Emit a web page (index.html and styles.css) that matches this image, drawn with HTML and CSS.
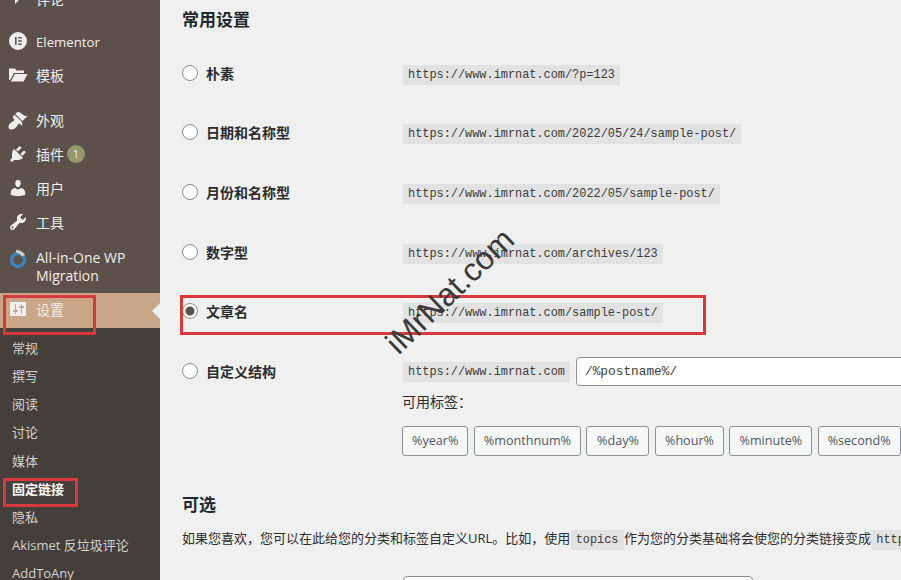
FILE: index.html
```html
<!DOCTYPE html>
<html lang="zh-CN">
<head>
    <meta charset="UTF-8">
    <title>固定链接设置</title>
    <link rel="stylesheet" href="styles.css">
</head>
<body>

    <!-- Admin menu -->
    <div class="sidebar">
        <div class="menu-item">
            <svg class="menu-icon menu-icon-comment" viewBox="0 0 20 20"><path d="M5 2h10c1.100 0 2 .9 2 2v6c0 1.100-.9 2-2 2h-3l-5 5v-5H5c-1.100 0-2-.9-2-2V4c0-1.100.9-2 2-2z"/></svg>
            <span>评论</span>
        </div>
        <div class="menu-sep-sm"></div>
        <div class="menu-item">
            <svg class="menu-icon" viewBox="0 0 20 20"><path fill-rule="evenodd" d="M10 1a9 9 0 1 0 0 18 9 9 0 0 0 0-18zM7 6h1.600v8H7zm3.200 0h3.500v1.600h-3.500zm0 3.200h3.500v1.600h-3.500zm0 3.200h3.500V14h-3.500z"/></svg>
            <span class="menu-latin">Elementor</span>
        </div>
        <div class="menu-item">
            <svg class="menu-icon" viewBox="0 0 20 20"><path d="M1 3.500h6l1.500 2H16V8H6L2.200 15H1zM6.800 9H19.500l-3.800 7.500H2.800z"/></svg>
            <span>模板</span>
        </div>
        <div class="menu-sep"></div>
        <div class="menu-item">
            <svg class="menu-icon" viewBox="0 0 20 20"><path d="M14.500 11L7.400 4l1.500-1.500c.5-.6 2.300-.5 3.500.3 1.200.8 1.400 1.300 2.900 2.100 1.200.6 2.500 1.300 4.400.9zm-.7.7L6.700 4.700 4.900 6.500c-.4.4-.4 1 0 1.400l1.100 1.100c.4.4.4 1 0 1.400-.6.6-1.400 1.100-2.200 1.700-.4.3-.7.5-1 .8C1.400 13.200.5 15 .5 17c0 1.400 1.100 2.500 2.500 2.500 2 0 3.800-.9 5.100-2.300.3-.3.500-.7.800-1 .6-.8 1.100-1.600 1.700-2.200.4-.4 1-.4 1.400 0l1.100 1.100c.4.4 1 .4 1.400 0z"/></svg>
            <span>外观</span>
        </div>
        <div class="menu-item">
            <svg class="menu-icon" viewBox="0 0 20 20"><path d="M13.110 4.360L9.870 7.600 8 5.730l3.240-3.240c.35-.34 1.050-.2 1.560.32.52.51.66 1.210.31 1.550zm-8 1.770l.91-1.120 9.010 9.010-1.190.84c-.71.71-2.630 1.160-3.820 1.160H6.140L4.900 17.260c-.59.59-1.540.59-2.120 0-.59-.58-.59-1.530 0-2.120l1.240-1.240v-3.880c0-1.130.4-3.190 1.090-3.890zm7.260 3.970l3.240-3.240c.34-.35 1.040-.21 1.550.31.52.51.66 1.210.31 1.550l-3.240 3.250z"/></svg>
            <span>插件</span><span class="count-badge">1</span>
        </div>
        <div class="menu-item">
            <svg class="menu-icon" viewBox="0 0 20 20"><path d="M10 9.250c-2.270 0-2.730-3.440-2.730-3.440C7 4.020 7.820 2 9.970 2c2.160 0 2.980 2.020 2.710 3.810 0 0-.41 3.440-2.680 3.440zm0 2.570L12.720 10c2.390 0 4.520 2.330 4.520 4.530v2.490s-3.650 1.130-7.240 1.130c-3.650 0-7.240-1.130-7.240-1.130v-2.490c0-2.250 1.940-4.480 4.470-4.480z"/></svg>
            <span>用户</span>
        </div>
        <div class="menu-item">
            <svg class="menu-icon" viewBox="0 0 20 20"><path fill-rule="evenodd" d="M16.680 9.770c-1.340 1.340-3.300 1.670-4.950.99l-5.410 6.520c-.99.99-2.590.99-3.580 0s-.99-2.590 0-3.570l6.520-5.420c-.68-1.650-.35-3.610.99-4.950 1.280-1.280 3.120-1.620 4.720-1.060l-2.890 2.890 2.820 2.820 2.860-2.870c.53 1.580.18 3.390-1.080 4.670zM3.810 16.210c.4.39 1.040.39 1.430 0 .4-.4.4-1.040 0-1.430-.39-.4-1.030-.4-1.430 0-.39.39-.39 1.030 0 1.430z"/></svg>
            <span>工具</span>
        </div>
        <div class="menu-item menu-item-tall">
            <svg class="menu-icon" viewBox="0 0 20 20"><circle cx="10" cy="11" r="6.500" fill="none" stroke="#3b86b8" stroke-width="3.500"/><path d="M8 .8c4.200.2 7.500 2.200 9 5.500l-3.200 1.200c-1-2.200-3.200-3.500-5.800-3.700z" fill="#cfcac6"/></svg>
            <span class="menu-label-wrap">All-in-One WP Migration</span>
        </div>
        <div class="menu-item menu-item-active">
            <svg class="menu-icon" viewBox="0 0 20 20"><path fill-rule="evenodd" d="M18 16V4c0-.55-.45-1-1-1H3c-.55 0-1 .45-1 1v12c0 .55.45 1 1 1h14c.55 0 1-.45 1-1zM8 11h1c.55 0 1 .45 1 1s-.45 1-1 1H8v1.500c0 .28-.22.5-.5.5s-.5-.22-.5-.5V13H6c-.55 0-1-.45-1-1s.45-1 1-1h1V5.500c0-.28.22-.5.5-.5s.5.22.5.5V11zm5-2h-1c-.55 0-1-.45-1-1s.45-1 1-1h1V5.500c0-.28.22-.5.5-.5s.5.22.5.5V7h1c.55 0 1 .45 1 1s-.45 1-1 1h-1v5.500c0 .28-.22.5-.5.5s-.5-.22-.5-.5V9z"/></svg>
            <span>设置</span>
        </div>
        <ul class="submenu">
            <li>常规</li>
            <li>撰写</li>
            <li>阅读</li>
            <li>讨论</li>
            <li>媒体</li>
            <li class="current">固定链接</li>
            <li>隐私</li>
            <li>Akismet 反垃圾评论</li>
            <li>AddToAny</li>
        </ul>
    </div>

    <!-- Permalink settings -->
    <div class="content">
        <h2 class="section-title">常用设置</h2>

        <label class="link-row">
            <span class="link-name"><input type="radio" name="structure">朴素</span>
            <span><code>https://www.imrnat.com/?p=123</code></span>
        </label>
        <label class="link-row">
            <span class="link-name"><input type="radio" name="structure">日期和名称型</span>
            <span><code>https://www.imrnat.com/2022/05/24/sample-post/</code></span>
        </label>
        <label class="link-row">
            <span class="link-name"><input type="radio" name="structure">月份和名称型</span>
            <span><code>https://www.imrnat.com/2022/05/sample-post/</code></span>
        </label>
        <label class="link-row">
            <span class="link-name"><input type="radio" name="structure">数字型</span>
            <span><code>https://www.imrnat.com/archives/123</code></span>
        </label>
        <label class="link-row">
            <span class="link-name"><input type="radio" name="structure" checked>文章名</span>
            <span><code>https://www.imrnat.com/sample-post/</code></span>
        </label>

        <div class="custom-row">
            <label class="link-name custom-name"><input type="radio" name="structure">自定义结构</label>
            <div class="custom-body">
                <div class="custom-line">
                    <code>https://www.imrnat.com</code>
                    <input class="custom-input" type="text" value="/%postname%/">
                </div>
                <p class="tags-label">可用标签：</p>
                <div class="tags">
                    <button>%year%</button>
                    <button>%monthnum%</button>
                    <button>%day%</button>
                    <button>%hour%</button>
                    <button>%minute%</button>
                    <button>%second%</button>
                </div>
            </div>
        </div>

        <h2 class="section-title optional-title">可选</h2>
        <p class="optional-text">如果您喜欢，您可以在此给您的分类和标签自定义URL。比如，使用 <code>topics</code> 作为您的分类基础将会使您的分类链接变成 <code>http://www.imrnat.com/topics/</code></p>
        <div class="base-row"><input class="base-input" type="text"></div>
    </div>

    <!-- Annotations on top of the screenshot -->
    <div class="mark mark-settings"></div>
    <div class="mark mark-permalink"></div>
    <div class="mark mark-row"></div>
    <div class="watermark">iMrNat.com</div>

</body>
</html>
```

FILE: styles.css
```css
/* Basic Styles */
html, body {
    height: 100%;
    margin: 0;
    padding: 0;
    overflow: hidden;
}

body {
    display: flex;
    background-color: #f0f0f0;
    color: #2c2c2c;
    font-family: "Open Sans", "Noto Sans CJK SC", sans-serif;
    font-size: 13px;
}

/* Admin menu */
.sidebar {
    flex: 0 0 160px;
    height: 620px;
    margin-top: -18px;
    background-color: #5b504a;
    color: #f1efed;
    font-size: 14px;
}

.menu-item {
    display: flex;
    align-items: center;
    height: 34px;
    padding-left: 8px;
}

.menu-item-tall {
    height: 54px;
    align-items: flex-start;
    padding-top: 10px;
    box-sizing: border-box;
    line-height: 18px;
}

.menu-item-active {
    position: relative;
    box-sizing: border-box;
    height: 35px;
    padding-bottom: 4px;
    background-color: #c9a688;
}

.menu-item-active::after {
    content: "";
    position: absolute;
    right: 0;
    top: 10px;
    border: 8px solid transparent;
    border-left-width: 0;
    border-right-color: #f0f0f0;
}

.menu-sep-sm {
    height: 8px;
}

.menu-sep {
    height: 11px;
}

.menu-icon {
    flex: 0 0 20px;
    width: 20px;
    height: 20px;
    margin-right: 8px;
    fill: #f1efed;
}

.menu-icon-comment {
    margin-top: -4px;
}

.menu-latin {
    padding-top: 2px;
    font-size: 13.2px;
}

.menu-label-wrap {
    width: 110px;
}

.count-badge {
    width: 18px;
    height: 18px;
    margin-left: 3px;
    border-radius: 50%;
    background-color: #93996b;
    font-size: 11px;
    line-height: 18px;
    text-align: center;
}

.submenu {
    margin: 0;
    padding: 6px 0 0 12px;
    list-style: none;
    height: 300px;
    background-color: #443f3b;
    color: #d5d1ce;
    font-size: 13px;
}

.submenu li {
    height: 28.15px;
    line-height: 28px;
    white-space: nowrap;
}

.submenu .current {
    color: #ffffff;
    font-weight: 700;
}

/* Settings content */
.content {
    flex: 1;
    min-width: 0;
    padding-left: 22px;
    white-space: nowrap;
}

.section-title {
    height: 43px;
    margin: 0;
    font-size: 17px;
    font-weight: 700;
    line-height: 40px;
    color: #23282d;
}

.link-row {
    display: grid;
    grid-template-columns: 221px 1fr;
    align-items: center;
    height: 59.6px;
}

.link-name {
    display: flex;
    align-items: center;
    font-size: 14px;
    font-weight: 600;
}

.link-name input {
    appearance: none;
    box-sizing: border-box;
    width: 16px;
    height: 16px;
    margin: 0 8px 0 0;
    border: 1px solid #8a8a8a;
    border-radius: 50%;
    background-color: #ffffff;
}

.link-name input:checked {
    background: radial-gradient(circle, #5b504a 0 4px, #ffffff 5px);
}

code {
    padding: 3px 5px;
    background-color: #e2e2e2;
    color: #3c3c3c;
    font-family: "Liberation Mono", monospace;
    font-size: 11.9px;
}

.custom-row {
    display: grid;
    grid-template-columns: 221px 1fr;
    padding-top: 16px;
}

.custom-name {
    height: 29px;
}

.custom-line {
    display: flex;
    align-items: center;
    height: 29px;
}

.custom-line code {
    margin-top: 2px;
}

.custom-input {
    flex: 0 0 360px;
    box-sizing: border-box;
    height: 29px;
    margin-left: 6px;
    padding: 0 8px;
    border: 1px solid #8c8f94;
    border-radius: 4px;
    background-color: #ffffff;
    color: #3c3c3c;
    font-family: "Liberation Mono", monospace;
    font-size: 12.8px;
}

.tags-label {
    margin: 7px 0 0 -1px;
    font-size: 14px;
    line-height: 18px;
}

.tags {
    display: flex;
    gap: 5.5px;
    margin: 15px 0 0 -1px;
}

.tags button {
    flex: none;
    min-width: 63px;
    height: 30px;
    padding: 0 9px;
    border: 1px solid #8c8f94;
    border-radius: 3px;
    background-color: #f6f7f7;
    color: #50575e;
    font-family: "Open Sans", sans-serif;
    font-size: 12.6px;
}

.optional-title {
    margin-top: 29px;
}

.optional-text {
    margin: 0;
    line-height: 20px;
    font-size: 13px;
    word-spacing: -3px;
}

.optional-text code {
    word-spacing: 0;
}

.base-row {
    padding: 26px 0 0 221px;
}

.base-input {
    box-sizing: border-box;
    width: 350px;
    height: 29px;
    border: 1px solid #8c8f94;
    border-radius: 4px;
    background-color: #ffffff;
}

/* Annotations */
.mark {
    position: absolute;
    box-sizing: border-box;
    border: 3px solid #d8393c;
}

.mark-settings {
    left: 3px;
    top: 295px;
    width: 93px;
    height: 40px;
}

.mark-permalink {
    left: 3px;
    top: 478px;
    width: 75px;
    height: 29px;
}

.mark-row {
    left: 180px;
    top: 295px;
    width: 526px;
    height: 40px;
}

.watermark {
    position: absolute;
    left: 368px;
    top: 271px;
    transform: rotate(-44deg);
    color: #3a3a3a;
    font-family: "Liberation Sans", sans-serif;
    font-size: 32px;
    line-height: 40px;
}
```
